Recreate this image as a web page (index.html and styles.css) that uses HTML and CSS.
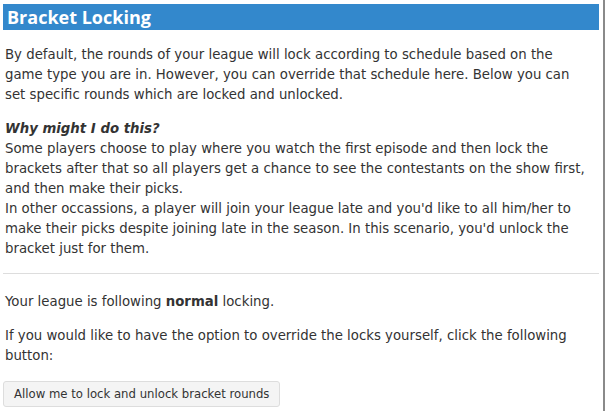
FILE: index.html
```html
<!DOCTYPE html>
<html lang="en">
<head>
    <meta charset="UTF-8">
    <title>Bracket Locking</title>
    <link rel="stylesheet" href="styles.css">
</head>
<body>
    <div class="page">
        <h2 class="section-title">Bracket Locking</h2>

        <p>By default, the rounds of your league will lock according to schedule based on the game type you are in. However, you can override that schedule here. Below you can set specific rounds which are locked and unlocked.</p>

        <p>
            <em class="why">Why might I do this?</em><br>
            Some players choose to play where you watch the first episode and then lock the brackets after that so all players get a chance to see the contestants on the show first, and then make their picks.<br>
            In other occassions, a player will join your league late and you'd like to all him/her to make their picks despite joining late in the season. In this scenario, you'd unlock the bracket just for them.
        </p>

        <hr>

        <p>Your league is following <strong>normal</strong> locking.</p>

        <p>If you would like to have the option to override the locks yourself, click the following button:</p>

        <button class="btn">Allow me to lock and unlock bracket rounds</button>
    </div>
</body>
</html>
```

FILE: styles.css
```css
body {
    margin: 0;
    background-color: #fff;
    font-family: "DejaVu Sans", Arial, sans-serif;
    font-size: 13.3px;
    line-height: 20px;
    color: #333;
}

.page {
    width: 596px;
    min-height: 411px;
    padding: 4px 4px 0 3px;
    border-right: 2px solid #8a8a8a;
    box-sizing: content-box;
}

.section-title {
    margin: 0 0 15px;
    padding: 0 4px;
    height: 26px;
    line-height: 26px;
    background-color: #3388cc;
    color: #fff;
    font-family: "Open Sans", Arial, sans-serif;
    font-size: 18px;
    font-weight: bold;
}

p {
    margin: 0 0 14px;
    padding: 0 7px 0 2px;
}

.why {
    font-weight: bold;
}

hr {
    margin: 2px 0 18px;
    border: none;
    border-top: 1px solid #ddd;
}

.btn {
    font-family: "DejaVu Sans", Arial, sans-serif;
    font-size: 11.7px;
    line-height: 14px;
    color: #333;
    background-color: #f4f4f4;
    border: 1px solid #ddd;
    border-radius: 3px;
    padding: 5px 10px;
    margin: 1px 0 0;
    cursor: pointer;
}
```
